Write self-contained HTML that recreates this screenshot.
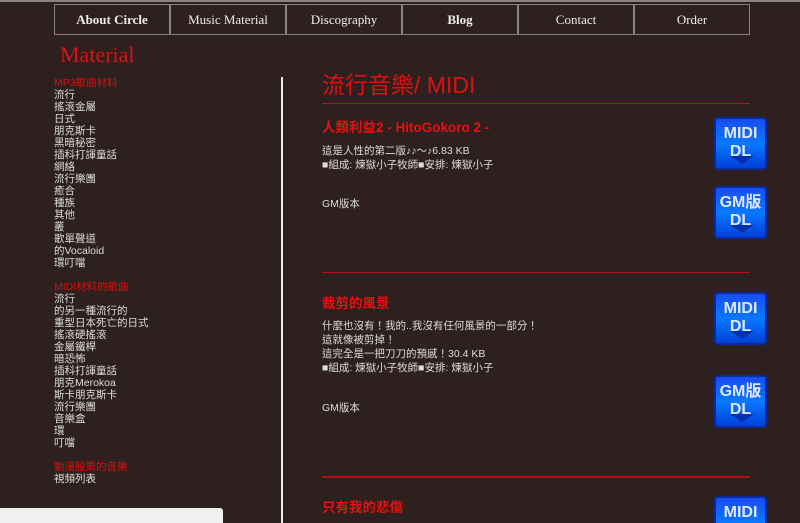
<!DOCTYPE html>
<html style="width:800px;height:523px;overflow:hidden"><head><meta charset="utf-8"><style>
*{margin:0;padding:0;box-sizing:border-box}
body{width:800px;height:523px;overflow:hidden;background:#2d201e;position:relative;font-family:"Liberation Sans","Noto Sans CJK TC",sans-serif;color:#ddd}
.top{position:absolute;left:0;top:0;width:800px;height:2px;background:#8a8480}
.nav{position:absolute;left:54px;top:4px;width:696px;height:31px;display:flex;border:1px solid #8a8480}
.nav div{flex:1;border-right:2px solid #8a8480;text-align:center;line-height:29px;font-family:"Liberation Serif",serif;font-size:13px;color:#eee}
.nav div:last-child{border-right:none}
.mat{position:absolute;left:60px;top:42px;font-family:"Liberation Serif",serif;font-size:22px;color:#e01010}
.side{position:absolute;left:54px;top:77px;font-size:10.5px;line-height:12px;color:#ddd}
.side .h{color:#d81010}
.vl{position:absolute;left:281px;top:77px;width:2px;height:446px;background:#eee}
.wb{position:absolute;left:0;top:508px;width:223px;height:15px;background:#f0f0f0;border-radius:0 3px 0 0}
.ab{position:absolute;font-size:10.5px;line-height:14px;color:#ddd;left:322px}
.ttl{position:absolute;left:322px;top:66px;font-size:23px;color:#e01010}
.hr{position:absolute;left:322px;width:428px;height:1px;background:#b01010}
.et{position:absolute;left:322px;font-size:13.5px;font-weight:bold;color:#e81010}
.ic{position:absolute;left:714px;width:53px;height:53px;border-radius:4px;background:linear-gradient(#1a4cf0,#0a78ff 50%,#0040d8);border:2px solid #0a2aa0;color:#dfe8ff;font-weight:bold;text-align:center;font-size:16px;line-height:18px;padding-top:6px}
.ic:after{content:"";position:absolute;left:14px;bottom:4px;border-left:12px solid transparent;border-right:12px solid transparent;border-top:8px solid #0030b0}
</style></head><body>
<div class="top"></div>
<div class="nav"><div style="font-weight:bold">About Circle</div><div>Music Material</div><div>Discography</div><div style="font-weight:bold">Blog</div><div>Contact</div><div>Order</div></div>
<div class="mat">Material</div>
<div class="side">
<div class="h">MP3歌曲材料</div><div>流行</div><div>搖滾金屬</div><div>日式</div><div>朋克斯卡</div><div>黑暗秘密</div><div>插科打諢童話</div><div>網絡</div><div>流行樂團</div><div>癒合</div><div>種族</div><div>其他</div><div>叢</div><div>歌單聲道</div><div>的Vocaloid</div><div>環叮噹</div>
<div style="height:12px"></div>
<div class="h">MIDI材料的歌曲</div><div>流行</div><div>的另一種流行的</div><div>重型日本死亡的日式</div><div>搖滾硬搖滾</div><div>金屬鐵桿</div><div>暗恐怖</div><div>插科打諢童話</div><div>朋克Merokoa</div><div>斯卡朋克斯卡</div><div>流行樂團</div><div>音樂盒</div><div>環</div><div>叮噹</div>
<div style="height:12px"></div>
<div class="h">動漫股票的音樂</div><div>視頻列表</div>
</div>
<div class="vl"></div>
<div class="wb"></div>
<div class="ttl">流行音樂/ MIDI</div>
<div class="hr" style="top:103px;background:#c01010"></div>
<div class="et" style="top:116px">人類利益2 - HitoGokoro 2 -</div>
<div class="ab" style="top:144px">這是人性的第二版♪♪～♪6.83 KB<br>■組成: 煉獄小子牧師■安排: 煉獄小子</div>
<div class="ab" style="top:197px">GM版本</div>
<div class="ic" style="top:117px">MIDI<br>DL</div>
<div class="ic" style="top:186px">GM版<br>DL</div>
<div class="hr" style="top:272px"></div>
<div class="et" style="top:292px">裁剪的風景</div>
<div class="ab" style="top:319px">什麼也沒有！我的..我沒有任何風景的一部分！<br>這就像被剪掉！<br>這完全是一把刀刀的預感！30.4 KB<br>■組成: 煉獄小子牧師■安排: 煉獄小子</div>
<div class="ab" style="top:401px">GM版本</div>
<div class="ic" style="top:292px">MIDI<br>DL</div>
<div class="ic" style="top:375px">GM版<br>DL</div>
<div class="hr" style="top:476px;height:2px"></div>
<div class="et" style="top:496px">只有我的悲傷</div>
<div class="ic" style="top:496px">MIDI<br>DL</div>
</body></html>
